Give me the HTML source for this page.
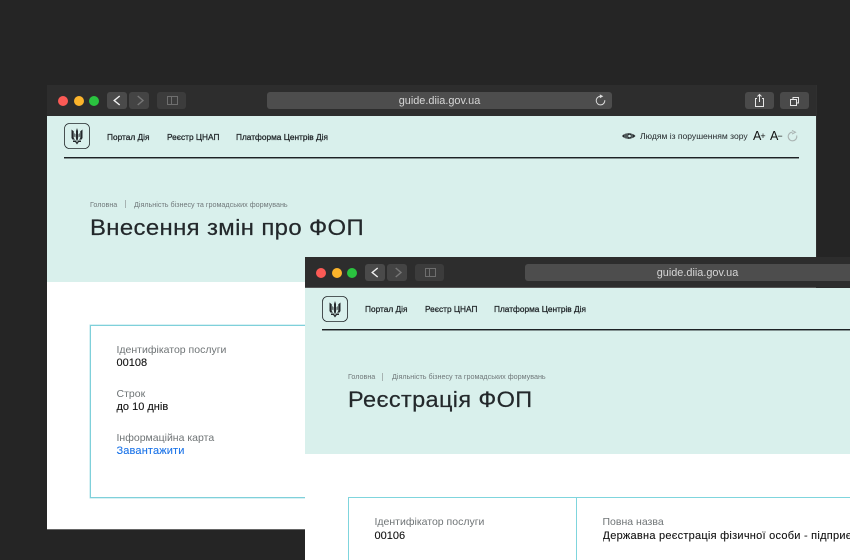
<!DOCTYPE html>
<html lang="uk">
<head>
<meta charset="utf-8">
<title>Дія</title>
<style>
html,body{margin:0;padding:0;background:#252525;width:850px;height:560px;overflow:hidden;}
body{position:relative;font-family:"Liberation Sans","DejaVu Sans",sans-serif;}
.win{position:absolute;overflow:hidden;background:#fff;}
.a{position:absolute;white-space:nowrap;}
.bar{position:absolute;left:0;top:0;width:100%;height:31px;background:#2d2d2d;}
.dot{position:absolute;top:11px;width:10px;height:10px;border-radius:50%;}
.btn{position:absolute;top:7px;height:17px;border-radius:3px;background:#4a4a4a;}
.url{position:absolute;left:220px;top:7px;height:17px;background:#4d4d4d;border-radius:3px;color:#d6d6d6;font-size:10.9px;line-height:18px;text-align:center;}
.hero{position:absolute;left:0;top:31px;width:100%;background:#d9f0ec;}
.nav{font-size:8.3px;color:#1d2225;line-height:12px;-webkit-text-stroke:.25px #1d2225;}
.line{position:absolute;left:17px;top:72px;height:1px;background:#1d2225;box-shadow:0 1px 0 rgba(29,34,37,.45);}
.crumb{font-size:7.2px;color:#70787a;line-height:8px;}
.title{font-size:22.5px;color:#23282b;line-height:28px;letter-spacing:.35px;transform-origin:0 50%;-webkit-text-stroke:.2px #23282b;}
.lab{font-size:10.5px;color:#6f7476;line-height:12px;}
.val{font-size:11px;color:#111;line-height:13px;-webkit-text-stroke:.1px #111;}
.card{box-sizing:border-box;box-shadow:inset 0 0 0 1px #7fd0da,0 0 0 .5px rgba(127,208,218,.6);}
svg{position:absolute;overflow:visible;}
</style>
</head>
<body>

<!-- Window 1 -->
<div class="win" style="left:47px;top:85px;width:769px;height:444px;">
  <div class="bar"></div>
  <div class="dot" style="left:11px;background:#fb5a55;"></div>
  <div class="dot" style="left:27px;background:#fcb42b;"></div>
  <div class="dot" style="left:42px;background:#2ac33f;"></div>
  <div class="btn" style="left:60px;width:20px;"></div>
  <div class="btn" style="left:82px;width:20px;background:#444;"></div>
  <div class="btn" style="left:110px;width:29px;background:#3c3c3c;"></div>
  <svg style="left:0;top:0" width="769" height="31" fill="none">
    <path d="M72.7 11L67.2 15.5L72.7 20" stroke="#f2f2f2" stroke-width="1.4"/>
    <path d="M90.7 11L96 15.5L90.7 20" stroke="#777" stroke-width="1.4"/>
    <rect x="120.5" y="11.5" width="10" height="8" stroke="#6e6e6e"/><path d="M124.5 11.5V19.5" stroke="#6e6e6e"/>
  </svg>
  <div class="url" style="width:345px;">guide.diia.gov.ua</div>
  <svg style="left:0;top:0" width="769" height="31" fill="none">
    <path d="M557.8 15.2A4.3 4.3 0 1 1 553.3 11.3" stroke="#ddd" stroke-width="1"/>
    <path d="M552.8 9.4L556.3 11.3L552.8 13.2Z" fill="#ddd"/>
  </svg>
  <div class="btn" style="left:698px;width:29px;"></div>
  <div class="btn" style="left:733px;width:29px;"></div>
  <svg style="left:0;top:0" width="769" height="31" fill="none" stroke="#e6e6e6">
    <path d="M710 13.5H708.5V21.5H716.5V13.5H715M712.5 17V9.5M710.5 11.5L712.5 9.5L714.5 11.5"/>
    <rect x="743.5" y="14.5" width="6" height="6"/>
    <path d="M746 14.5V12.5H751.5V18H749.5"/>
  </svg>
  <div class="hero" style="height:166px;"></div>
  <svg style="left:17px;top:38px" width="26" height="26" fill="none">
    <rect x=".5" y=".5" width="25" height="25" rx="5" stroke="#23282b" stroke-width=".8"/>
    <g fill="#23282b">
      <path d="M13 5L12 8V16L13 18.5L14 16V8Z"/>
      <path d="M7.5 6.5L9.7 8.2V15L11 16.7L8.4 16.5L7.5 15Z"/>
      <path d="M18.5 6.5L16.3 8.2V15L15 16.7L17.6 16.5L18.5 15Z"/>
      <path d="M9 17.5H11.8L13 19.4L14.2 17.5H17V19H14.8L13 21.5L11.2 19H9Z"/>
      <path d="M10.4 10L11.4 11.2V14.5L10.4 13.6Z"/>
      <path d="M15.6 10L14.6 11.2V14.5L15.6 13.6Z"/>
    </g>
  </svg>
  <div class="a nav" style="left:60px;top:46px;">Портал Дія</div>
  <div class="a nav" style="left:120px;top:46px;">Реєстр ЦНАП</div>
  <div class="a nav" style="left:189px;top:46px;">Платформа Центрів Дія</div>
  <div class="line" style="width:735px;"></div>
  <svg style="left:0;top:0" width="769" height="80" fill="none">
    <path d="M575 51C578 47.5 585 47.3 588.5 51C585 54.8 578 54.8 575 51Z" fill="#23282b"/>
    <path d="M578 49V53M580 48.5V53.5M585 48.5V53.5" stroke="#d9f0ec" stroke-width=".5"/>
    <circle cx="582.5" cy="51" r="1.3" fill="#d9f0ec"/>
    <path d="M749.7 50.5A4.3 4.3 0 1 1 745.5 47.2" stroke="#a9b3b2" stroke-width="1.1"/>
    <path d="M745 45.4L748.5 47.2L745 49" stroke="#a9b3b2" stroke-width="1"/>
  </svg>
  <div class="a" style="left:593px;top:45px;font-size:8.55px;line-height:12px;color:#23282b;">Людям із порушенням зору</div>
  <div class="a" style="left:706px;top:44px;font-size:12.5px;line-height:15px;color:#111;letter-spacing:-1px;">A<span style="font-size:9px;vertical-align:1px;">+</span></div>
  <div class="a" style="left:723px;top:44px;font-size:12.5px;line-height:15px;color:#111;letter-spacing:-1px;">A<span style="font-size:9px;vertical-align:1px;">−</span></div>
  <div class="a crumb" style="left:43px;top:116px;">Головна</div>
  <div class="a" style="left:78px;top:115px;width:1px;height:8px;background:#a7b3b2;"></div>
  <div class="a crumb" style="left:87px;top:116px;">Діяльність бізнесу та громадських формувань</div>
  <div class="a title" style="left:43px;top:129px;transform:scaleX(1.062);">Внесення змін про ФОП</div>
  <div class="a card" style="left:43px;top:240px;width:400px;height:173px;"></div>
  <div class="a lab" style="left:69.5px;top:259px;">Ідентифікатор послуги</div>
  <div class="a val" style="left:69.5px;top:272px;">00108</div>
  <div class="a lab" style="left:69.5px;top:303px;">Строк</div>
  <div class="a val" style="left:69.5px;top:316px;">до 10 днів</div>
  <div class="a lab" style="left:69.5px;top:347px;">Інформаційна карта</div>
  <div class="a val" style="left:69.5px;top:360px;color:#1a73e8;letter-spacing:.15px;-webkit-text-stroke:.1px #1a73e8;">Завантажити</div>
</div>
<div style="position:absolute;left:47px;top:529px;width:258px;height:1px;background:#666;"></div>
<div style="position:absolute;left:816px;top:85px;width:1px;height:172px;background:#303030;"></div>

<!-- Window 2 -->
<div class="win" style="left:305px;top:257px;width:545px;height:303px;">
  <div class="bar"></div>
  <div class="a" style="left:0;top:30px;width:511px;height:1px;background:#555;"></div>
  <div class="dot" style="left:11px;background:#fb5a55;"></div>
  <div class="dot" style="left:27px;background:#fcb42b;"></div>
  <div class="dot" style="left:42px;background:#2ac33f;"></div>
  <div class="btn" style="left:60px;width:20px;"></div>
  <div class="btn" style="left:82px;width:20px;background:#444;"></div>
  <div class="btn" style="left:110px;width:29px;background:#3c3c3c;"></div>
  <svg style="left:0;top:0" width="545" height="31" fill="none">
    <path d="M72.7 11L67.2 15.5L72.7 20" stroke="#f2f2f2" stroke-width="1.4"/>
    <path d="M90.7 11L96 15.5L90.7 20" stroke="#777" stroke-width="1.4"/>
    <rect x="120.5" y="11.5" width="10" height="8" stroke="#6e6e6e"/><path d="M124.5 11.5V19.5" stroke="#6e6e6e"/>
  </svg>
  <div class="url" style="width:345px;">guide.diia.gov.ua</div>
  <div class="hero" style="height:166px;"></div>
  <svg style="left:17px;top:39px" width="26" height="26" fill="none">
    <rect x=".5" y=".5" width="25" height="25" rx="5" stroke="#23282b" stroke-width=".8"/>
    <g fill="#23282b">
      <path d="M13 5L12 8V16L13 18.5L14 16V8Z"/>
      <path d="M7.5 6.5L9.7 8.2V15L11 16.7L8.4 16.5L7.5 15Z"/>
      <path d="M18.5 6.5L16.3 8.2V15L15 16.7L17.6 16.5L18.5 15Z"/>
      <path d="M9 17.5H11.8L13 19.4L14.2 17.5H17V19H14.8L13 21.5L11.2 19H9Z"/>
      <path d="M10.4 10L11.4 11.2V14.5L10.4 13.6Z"/>
      <path d="M15.6 10L14.6 11.2V14.5L15.6 13.6Z"/>
    </g>
  </svg>
  <div class="a nav" style="left:60px;top:46px;">Портал Дія</div>
  <div class="a nav" style="left:120px;top:46px;">Реєстр ЦНАП</div>
  <div class="a nav" style="left:189px;top:46px;">Платформа Центрів Дія</div>
  <div class="line" style="width:528px;"></div>
  <div class="a crumb" style="left:43px;top:116px;">Головна</div>
  <div class="a" style="left:77px;top:116px;width:1px;height:8px;background:#a7b3b2;"></div>
  <div class="a crumb" style="left:87px;top:116px;">Діяльність бізнесу та громадських формувань</div>
  <div class="a title" style="left:43px;top:129px;transform:scaleX(1.045);">Реєстрація ФОП</div>
  <div class="a" style="left:43px;top:240px;width:502px;height:63px;overflow:hidden;box-sizing:border-box;border-top:1px solid #7fd5dd;border-left:1px solid #7fd5dd;"></div>
  <div class="a" style="left:271px;top:240px;width:1px;height:63px;background:#7fd5dd;"></div>
  <div class="a lab" style="left:69.5px;top:259px;">Ідентифікатор послуги</div>
  <div class="a val" style="left:69.5px;top:273px;">00106</div>
  <div class="a lab" style="left:297.5px;top:259px;">Повна назва</div>
  <div class="a" style="left:297.5px;top:273px;width:247.5px;height:13px;overflow:hidden;"><span class="val" style="display:block;white-space:nowrap;letter-spacing:.25px;">Державна реєстрація фізичної особи - підприємця</span></div>
</div>
</body>
</html>
